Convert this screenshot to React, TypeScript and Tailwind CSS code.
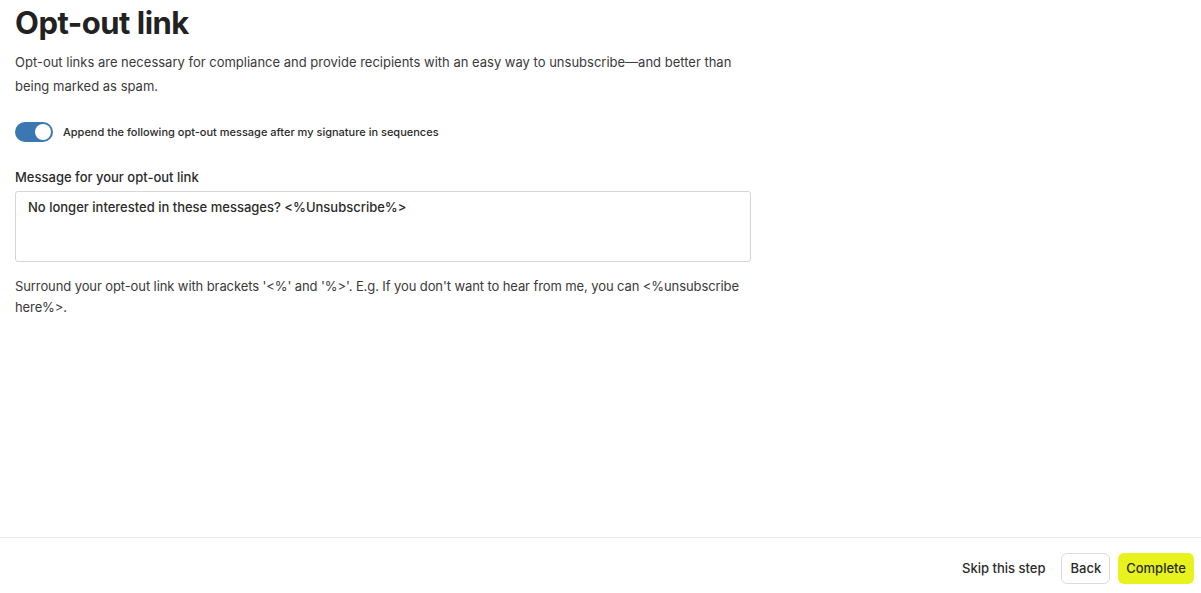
import React, { useState } from "react";

const App = () => {
  const [enabled, setEnabled] = useState(true);

  return (
    <div
      className="h-[593px] w-full bg-white flex flex-col text-[#2b2b2b]"
      style={{ fontFamily: "Inter, 'Noto Sans', sans-serif" }}
    >
      {/* Body */}
      <div className="flex-1 px-[15px] max-w-[766px]">
        <h1 className="pt-[1px] text-[31px] leading-[44px] font-bold tracking-[-0.5px] text-[#222]">
          Opt-out link
        </h1>
        <p className="mt-[5px] text-[13px] leading-[24px] text-[#3a3a3a]">
          Opt-out links are necessary for compliance and provide recipients with an easy way to
          unsubscribe—and better than being marked as spam.
        </p>

        {/* Toggle */}
        <div className="mt-[24px] flex items-center gap-[10px]">
          <button
            onClick={() => setEnabled(!enabled)}
            className={`relative h-[20px] w-[38px] rounded-full ${
              enabled ? "bg-[#3b77b0]" : "bg-gray-300"
            }`}
          >
            <span
              className={`absolute top-[2px] h-[16px] w-[16px] rounded-full bg-white ${
                enabled ? "left-[20px]" : "left-[2px]"
              }`}
            />
          </button>
          <span className="text-[11px] font-medium text-[#2b2b2b]">
            Append the following opt-out message after my signature in sequences
          </span>
        </div>

        {/* Message */}
        <div className="mt-[25px]">
          <label className="block text-[13px] font-medium leading-[20px] text-[#2b2b2b]">
            Message for your opt-out link
          </label>
          <div className="mt-[4px] h-[71px] w-[736px] rounded-[3px] border border-[#d6d6d6] px-[12px] py-[6px] text-[13px] font-medium text-[#2b2b2b]">
            No longer interested in these messages? &lt;%Unsubscribe%&gt;
          </div>
        </div>

        <p className="mt-[14px] w-[725px] text-[13px] leading-[21px] tracking-[-0.1px] text-[#3a3a3a]">
          Surround your opt-out link with brackets '&lt;%' and '%&gt;'. E.g. If you don't want to
          hear from me, you can &lt;%unsubscribe here%&gt;.
        </p>
      </div>

      {/* Footer */}
      <div className="h-[56px] border-t border-[#e6e6e6] flex items-start justify-end gap-[8px] pt-[15px] pr-[7px]">
        <button className="px-[8px] h-[31px] text-[13px] font-medium text-[#2b2b2b]">
          Skip this step
        </button>
        <button className="h-[31px] px-[8px] rounded-[6px] border border-[#dcdcdc] bg-white text-[13px] font-medium text-[#2b2b2b]">
          Back
        </button>
        <button className="h-[31px] px-[8px] rounded-[6px] bg-[#e8f21c] text-[13px] font-medium text-[#2b2b2b]">
          Complete
        </button>
      </div>
    </div>
  );
};

export default App;
